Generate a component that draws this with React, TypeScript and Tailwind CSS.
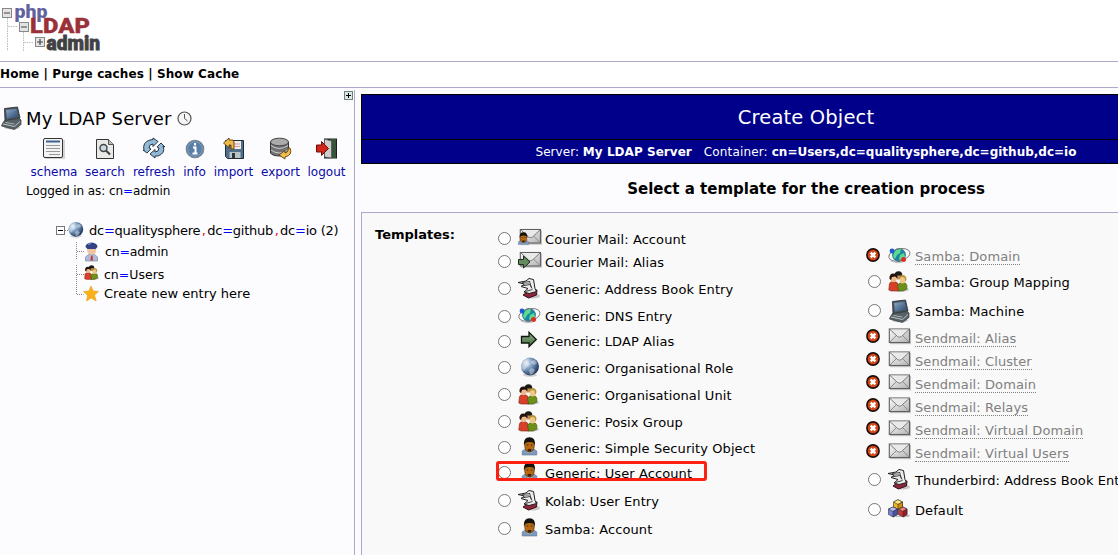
import React from "react";

type IconName =
  | "mailUser" | "mailAlias" | "book" | "dns" | "arrow" | "globe" | "group"
  | "user" | "machine" | "mail" | "cubes";

function Person() {
  return (
    <g>
      <path d="M3.700 18v-4l3-2h8.600l3 2v4z" fill="#7d99bb" stroke="#5d7899" strokeWidth=".6" />
      <path d="M8 11h6l-1 5h-4z" fill="#b9c9dc" />
      <ellipse cx="11" cy="8.700" rx="4.800" ry="6.500" fill="#b8690f" stroke="#3c2205" strokeWidth=".6" />
      <path d="M5.500 8.500C5 3 7 .3 11 .3S17 3 16.500 8.500l-1.300-2.700q-4-1.600-8.400 0z" fill="#15100b" />
      <path d="M9 12.500q2-1.500 4 0l-.5 2h-3z" fill="#3b2410" />
      <path d="M8.300 8h1.500M12.300 8h1.500" stroke="#3b2410" strokeWidth="1" />
    </g>
  );
}

function Envelope() {
  return (
    <g>
      <rect x="1.500" y="2.500" width="21" height="14.200" fill="#777" opacity=".4" />
      <rect x=".8" y="1.500" width="20.200" height="13.500" fill="url(#paper)" stroke="#606060" strokeWidth="1.100" />
      <path d="M1.500 14.500l7-7M20.500 14.500l-7-7" stroke="#8c8c8c" strokeWidth="1" />
      <path d="M1.500 2l7.500 7q2 1.500 4 0l7.500-7" fill="#e9e9e9" stroke="#7c7c7c" strokeWidth="1" />
    </g>
  );
}

function Globe() {
  return (
    <g>
      <ellipse cx="12" cy="18" rx="7" ry="1.800" fill="#888" opacity=".35" />
      <circle cx="12" cy="9.500" r="9" fill="url(#globe)" />
      <path d="M5 6q2-4 6-4l-1 3 2 2-3 3-3 4-3-3zM13 4l4-1 2 3-3 2-3-2zM11 13l3-2 3 2-2 4-3 1z" fill="#e8eef5" opacity=".45" />
    </g>
  );
}

function Icon({ name }: { name: IconName }) {
  let art: React.ReactNode = null;
  switch (name) {
    case "user":
      art = <g transform="translate(.5 0)"><Person /></g>;
      break;
    case "mail":
      art = <g transform="translate(.5 .5)"><Envelope /></g>;
      break;
    case "mailUser":
      art = <><g transform="translate(1.500 0)"><Envelope /></g><g transform="translate(-2.200 4) scale(.7)"><Person /></g></>;
      break;
    case "mailAlias":
      art = <><g transform="translate(1.500 0)"><Envelope /></g><path d="M.5 8.500h5V5l6.500 6-6.500 6v-3.500h-5z" fill="#638b5d" stroke="#1c2b1a" /></>;
      break;
    case "arrow":
      art = <path d="M3.500 6.500h7.500V2.300L18.300 9.500l-7.300 7.300v-3.800H3.500z" fill="url(#leaf)" stroke="#10180e" strokeWidth="1.300" />;
      break;
    case "globe":
      art = <Globe />;
      break;
    case "dns":
      art = (
        <>
          <circle cx="11" cy="9" r="6.500" fill="#1789a2" stroke="#0f5a77" strokeWidth=".6" />
          <path d="M7 5q3-3 6-2l-1 4-3 2-2 4-2-3zM12 9l4-2 1 4-3 4-3-2z" fill="#5edb91" />
          <ellipse cx="11.500" cy="9" rx="10.800" ry="6" transform="rotate(-14 11 9.500)" fill="none" stroke="#777" strokeWidth=".9" />
          <circle cx="4" cy="5" r="2.400" fill="#1e5bd0" /><circle cx="15.500" cy="13.500" r="2.500" fill="#df2e24" />
          <path d="M3 15q6 3 12 1" stroke="#bbb" fill="none" />
        </>
      );
      break;
    case "group":
      art = (
        <>
          <ellipse cx="13" cy="18.500" rx="8" ry="2" fill="#777" opacity=".4" />
          <circle cx="10.500" cy="4" r="3.800" fill="#1c1b16" /><path d="M8.500 4.500h4v4h-4z" fill="#c78d5c" />
          <path d="M.8 19l.6-6q.4-2.500 4-2.500 4 0 5 3L11 20H3z" fill="#d8402a" stroke="#7e2418" strokeWidth=".6" />
          <path d="M10.500 20l-1-6q2-3 6-2.500 3 .5 3.400 3V18l-4 2z" fill="#6d901b" stroke="#3c530c" strokeWidth=".6" />
          <ellipse cx="5.500" cy="7.500" rx="3" ry="3.700" fill="#edb98a" /><path d="M1.500 8q-.5-5.500 4-5.500T9.500 7L7 5.500 4 6 3 9z" fill="#24120d" />
          <ellipse cx="14.500" cy="9" rx="2.900" ry="3.500" fill="#efc886" /><path d="M11 8q0-4 3.500-4t4 4l-1 3-1-4.500-3-.5z" fill="#b59336" />
        </>
      );
      break;
    case "book":
      art = (
        <>
          <ellipse cx="15" cy="18" rx="7" ry="2.500" fill="#777" opacity=".4" />
          <path d="M5 17l8-5.500 6 .5-.5 5-8 3z" fill="#8d2639" stroke="#34101a" />
          <path d="M0 4.500l8-1.500L11 .5l4.500 1 1.500 9 1.500 3-7.500 2-5-1.500 4-3.500-7-2 3.500-2.500z" fill="#ececec" stroke="#222" />
          <path d="M4 4.500l8-1M3.500 8l8.500-1.500 2 4M11.500 3l2 7M7.500 13.500l7-2" stroke="#444" strokeWidth="1" fill="none" />
          <path d="M6 5.500l5-1 .5 1.500-5 1z" fill="#999" />
        </>
      );
      break;
    case "machine":
      art = (
        <>
          <ellipse cx="12" cy="20.500" rx="8" ry="1.800" fill="#777" opacity=".4" />
          <path d="M4.500 1.500L17.500 0l2.500 11-15 3z" fill="#4b545d" stroke="#25292e" strokeWidth=".8" />
          <path d="M6 3L16.500 1.800l1.700 8L7 11.500z" fill="url(#screen)" />
          <path d="M4.500 13.500l15-2L21 13v4.500L14.500 22.500l-13-3.500 1-2.500z" fill="#566166" stroke="#30383c" strokeWidth=".7" />
          <path d="M3 17l11.500 2.500L20 14.500" stroke="#bcc3c3" fill="none" /><path d="M5.500 15.500l9 1.500" stroke="#aab2b3" fill="none" />
        </>
      );
      break;
    case "cubes":
      art = (
        <>
          <path d="M5 18h16l1-2-6-1z" fill="#888" opacity=".5" />
          <g stroke="#333" strokeWidth=".6">
            <path d="M5.500 3L10 .7 14.500 3v5L10 10.500 5.500 8z" fill="#eeb71f" /><path d="M5.500 3L10 5.500 14.500 3 10 .7z" fill="#ffe777" /><path d="M10 5.500L14.500 3v5L10 10.500z" fill="#d78d0c" />
            <path d="M.5 10L5 8l4.500 2v5.500L5 18l-4.500-2.500z" fill="#7882d8" /><path d="M.5 10L5 8l4.500 2L5 12.500z" fill="#b8bef6" /><path d="M5 12.500L9.500 10v5.500L5 18z" fill="#4a54ab" />
            <path d="M10.500 10L15 8l4 2v5.500L15 18l-4.500-2.500z" fill="#cf3034" /><path d="M10.500 10L15 8l4 2-4 2.500z" fill="#ef8178" /><path d="M15 12.500l4-2.500v5.500L15 18z" fill="#981c22" />
          </g>
        </>
      );
      break;
  }
  return <svg width="24" height="23" viewBox="0 0 24 23" className="block shrink-0 overflow-visible">{art}</svg>;
}

function Defs() {
  return (
    <svg width="0" height="0" className="absolute">
      <defs>
        <linearGradient id="paper" x2="1" y2="1"><stop stopColor="#fafafa" /><stop offset="1" stopColor="#b4b4b4" /></linearGradient>
        <linearGradient id="leaf" x2="0" y2="1"><stop stopColor="#8fb58a" /><stop offset="1" stopColor="#3f653b" /></linearGradient>
        <linearGradient id="screen" x2="1" y2="1"><stop stopColor="#8fa9c8" /><stop offset="1" stopColor="#27466e" /></linearGradient>
        <radialGradient id="globe" cx=".3" cy=".3" r=".75"><stop stopColor="#e9f1f9" /><stop offset=".45" stopColor="#7d9dc2" /><stop offset="1" stopColor="#1d365e" /></radialGradient>
      </defs>
    </svg>
  );
}

type Row = { label: string; icon: IconName; h: string; off?: boolean; radio?: string; iconPad?: string };

const left: Row[] = [
  { label: "Courier Mail: Account", icon: "mailUser", h: "h-[23px]" },
  { label: "Courier Mail: Alias", icon: "mailAlias", h: "h-[27px]" },
  { label: "Generic: Address Book Entry", icon: "book", h: "h-[27px]" },
  { label: "Generic: DNS Entry", icon: "dns", h: "h-[25px]", radio: "pt-[5px]", iconPad: "pt-px" },
  { label: "Generic: LDAP Alias", icon: "arrow", h: "h-[27px]", radio: "pt-[5px]" },
  { label: "Generic: Organisational Role", icon: "globe", h: "h-[27px]" },
  { label: "Generic: Organisational Unit", icon: "group", h: "h-[27px]" },
  { label: "Generic: Posix Group", icon: "group", h: "h-[26px]" },
  { label: "Generic: Simple Security Object", icon: "user", h: "h-[25px]" },
  { label: "Generic: User Account", icon: "user", h: "h-[28px]" },
  { label: "Kolab: User Entry", icon: "book", h: "h-[28px]" },
  { label: "Samba: Account", icon: "user", h: "h-[28px]" },
];

const right: Row[] = [
  { label: "Samba: Domain", icon: "dns", h: "h-[26px]", off: true, radio: "pt-[3px]", iconPad: "pt-px" },
  { label: "Samba: Group Mapping", icon: "group", h: "h-[29px]" },
  { label: "Samba: Machine", icon: "machine", h: "h-[27px]" },
  { label: "Sendmail: Alias", icon: "mail", h: "h-[23px]", off: true },
  { label: "Sendmail: Cluster", icon: "mail", h: "h-[23px]", off: true },
  { label: "Sendmail: Domain", icon: "mail", h: "h-[23px]", off: true },
  { label: "Sendmail: Relays", icon: "mail", h: "h-[23px]", off: true },
  { label: "Sendmail: Virtual Domain", icon: "mail", h: "h-[23px]", off: true },
  { label: "Sendmail: Virtual Users", icon: "mail", h: "h-[27px]", off: true },
  { label: "Thunderbird: Address Book Entry", icon: "book", h: "h-[30px]" },
  { label: "Default", icon: "cubes", h: "h-[30px]" },
];

function TemplateRow({ row }: { row: Row }) {
  return (
    <div className={`flex items-start whitespace-nowrap ${row.h}`}>
      <div className={`w-[21px] shrink-0 ${row.radio ?? (row.off ? "pt-[2px]" : "pt-[4px]")}`}>
        {row.off ? (
          <svg width="14" height="14" viewBox="0 0 14 14" className="-ml-px block">
            <circle cx="7" cy="7" r="6.100" fill="#d4481a" stroke="#1d0c05" strokeWidth="1.600" />
            <path d="M4.700 4.700l4.600 4.600M9.300 4.700L4.700 9.300" stroke="#fff" strokeWidth="2.500" />
          </svg>
        ) : (
          <div className="ml-px size-[13px] rounded-full border border-[#767676] bg-white" />
        )}
      </div>
      <div className={`w-[27px] shrink-0 ${row.iconPad ?? "pt-0"}`}><Icon name={row.icon} /></div>
      <span className={`mt-[3px] h-[17px] leading-[17px] tracking-[0.09px] ${row.off ? "border-b border-dotted border-[#808080] text-[#808080]" : "text-black"}`}>{row.label}</span>
    </div>
  );
}

function Tool({ label, w, children }: { label: string; w: string; children: React.ReactNode }) {
  return (
    <div className={`flex shrink-0 flex-col items-center ${w}`}>
      <svg width="24" height="24" viewBox="0 0 24 24">{children}</svg>
      <span className="mt-[3px] text-[12px] leading-[17px] text-[#0a0aa8]">{label}</span>
    </div>
  );
}

function Logo() {
  return (
    <svg width="110" height="54" viewBox="0 0 110 54" className="block">
      <path d="M7.500 18v33M23.500 32v20M8 26.500h10M24 42.500h10" stroke="#bbb" strokeDasharray="1.500 1" fill="none" />
      <g fill="#e4e4e4" stroke="#888">
        <rect x="2.500" y="8.500" width="9" height="9" /><rect x="19.500" y="22.500" width="9" height="9" /><rect x="35.500" y="37.500" width="9" height="9" />
      </g>
      <path d="M4 13h6M21 27h6M37 42h6M40 39v6" stroke="#444" strokeWidth="1.200" />
      <g fontFamily="'Roboto', 'DejaVu Sans', sans-serif" fontWeight="900">
        <text x="14.500" y="17.500" fontSize="18.500" fill="#62629f" textLength="33" lengthAdjust="spacingAndGlyphs">php</text>
        <text x="30" y="33" fontSize="19.500" fill="#9b3038" stroke="#9b3038" strokeWidth=".3" textLength="60" lengthAdjust="spacingAndGlyphs">LDAP</text>
        <text x="46.500" y="50" fontSize="21" fill="#414144" stroke="#414144" strokeWidth=".8" textLength="53.500" lengthAdjust="spacingAndGlyphs">admin</text>
      </g>
    </svg>
  );
}

function Comma() {
  return <span className="inline-block w-[7px] text-center text-red-600">,</span>;
}
function Eq() {
  return <span className="text-[#0000ff]">=</span>;
}

export default function App() {
  return (
    <div className="flex h-[555px] w-[1118px] flex-col overflow-hidden bg-[#fcfcfe] font-['DejaVu_Sans',Verdana,sans-serif] text-[13px] text-black">
      <Defs />
      <header className="h-[62px] shrink-0 border-b border-[#aaaacc] bg-white"><Logo /></header>
      <nav className="h-[26px] shrink-0 whitespace-pre border-b border-[#aaaacc] bg-white pt-[4px] text-[12px] font-bold leading-[17px] tracking-[0.1px]">Home | Purge caches | Show Cache</nav>
      <div className="flex min-h-0 flex-1 pt-[2px]">
        <aside className="relative w-[355px] shrink-0 border-r border-[#aaaacc]">
          <svg width="9" height="9" viewBox="0 0 9 9" className="absolute right-px top-px">
            <rect x=".5" y=".5" width="8" height="8" fill="#dce8e8" stroke="#6f8080" /><path d="M2 4.500h5M4.500 2v5" stroke="#000" />
          </svg>
          <div className="flex h-[46px] items-start pt-[17px]">
            <div className="w-[26px] shrink-0"><Icon name="machine" /></div>
            <span className="whitespace-nowrap text-[18px] leading-[24px] tracking-[0.15px]">My LDAP Server</span>
            <svg width="15" height="15" viewBox="0 0 15 15" className="ml-[5px] mt-[4px]">
              <circle cx="7.500" cy="7.500" r="6.500" fill="#f5f5f5" stroke="#555" strokeWidth="1.200" /><path d="M7.500 3v4.500l3 2.500" stroke="#555" fill="none" />
            </svg>
          </div>
          <div className="flex whitespace-nowrap pl-[27px] pt-px">
            <Tool label="schema" w="w-[54px]">
              <rect x="3" y="3" width="20" height="19" fill="#999" opacity=".4" /><rect x="1.500" y="1.500" width="19" height="19" rx="1.500" fill="#f3f3f3" stroke="#333" />
              <path d="M4 4.500h14" stroke="#3d638f" strokeWidth="2" /><path d="M4 8.500h14M4 11.500h14M4 14.500h14M7 17.500h11" stroke="#999" />
            </Tool>
            <Tool label="search" w="w-[48px]">
              <path d="M3.500 2.500h12l5 5v14h-17z" fill="#e9e9e7" stroke="#333" /><path d="M15.500 2.500v5h5" fill="#bbb" stroke="#555" /><circle cx="10.500" cy="11" r="3.500" fill="#cad8e0" stroke="#444" strokeWidth="1.400" /><path d="M13 13.500l4 4" stroke="#444" strokeWidth="2.200" />
            </Tool>
            <Tool label="refresh" w="w-[50px]">
              <g fill="#93b9d6" stroke="#263949" strokeWidth="1"><path d="M2 14Q0 5 8 3l3-.5V1l5 3.500-5 5V7Q7 7 7 11l2 1-4 4-4-3z" /><path d="M21 9q3 7-5 10h-3v2l-5-4 5-4.500V15q4 0 4-4l-2-1 4-4 4 4z" /></g>
            </Tool>
            <Tool label="info" w="w-[31px]">
              <circle cx="12" cy="12" r="8.700" fill="#587eaa" stroke="#7b8590" strokeWidth="1.300" /><circle cx="12" cy="12" r="7.300" fill="none" stroke="#7d9dc0" /><path d="M12 6v2.500M10 10.500h2.500v5.500M9.500 16.500h5" stroke="#fff" strokeWidth="2" fill="none" />
            </Tool>
            <Tool label="import" w="w-[47px]">
              <path d="M3.500 3.500h18v18h-16l-2-2z" fill="#516f8a" stroke="#202c35" /><path d="M9 4h10v8H9z" fill="#f1eeee" /><path d="M10 7h8M10 9.500h8" stroke="#d99" /><path d="M7.500 15h11v6h-11z" fill="#b8c2c9" /><path d="M10 16h3v5h-3z" fill="#333" />
              <path d="M9 12V8H7v3L1.500 6 7 1v2h4l1 2v7z" fill="#efb84b" stroke="#5d3b0b" strokeWidth=".9" />
            </Tool>
            <Tool label="export" w="w-[47px]">
              <path d="M1.500 5v11c2 4 16 4 18 0V5z" fill="#727272" stroke="#333" /><path d="M2 8.500q8 6 17 0M2 13q8 6 17 0" stroke="#ccc" fill="none" /><ellipse cx="10.500" cy="5" rx="9" ry="3.800" fill="#aaa" stroke="#444" />
              <path d="M21 11q3 7-5 9v2l-6-4 6-4.500V16q4-1 3-5z" fill="#f0bd50" stroke="#5d3b0b" strokeWidth=".9" />
            </Tool>
            <Tool label="logout" w="w-[45px]">
              <path d="M9 1.500h13v20H9z" fill="#182018" /><path d="M15 2h6v19h-6z" fill="#35543a" /><path d="M9.500 2l7 2v17l-7-1z" fill="#ccc" stroke="#555" strokeWidth=".8" /><path d="M1.500 8h5V4.500l7 7-7 7V15h-5z" fill="#d3261a" stroke="#681008" />
            </Tool>
          </div>
          <div className="pl-[26px] pt-[2px] text-[12px] leading-[17px] tracking-[-0.08px]">Logged in as: cn<Eq />admin</div>
          <div className="whitespace-nowrap pt-[19px]">
            <div className="flex h-[22px] items-center pl-[56px]">
              <svg width="33" height="22" viewBox="0 0 33 22" className="shrink-0">
                <rect x=".5" y="7.500" width="8" height="8" fill="#fff" stroke="#777" /><path d="M2 11.500h5" stroke="#000" /><path d="M9 11.500h4" stroke="#888" strokeDasharray="1 1" />
                <g transform="translate(10 2.500) scale(.82)"><Globe /></g>
              </svg>
              <span className="mt-px tracking-[-0.24px]">dc<Eq />qualitysphere<Comma />dc<Eq />github<Comma />dc<Eq />io (2)</span>
            </div>
            <div className="flex h-[22px] items-center pl-[76px]">
              <svg width="29" height="22" viewBox="0 0 29 22" className="shrink-0">
                <path d="M.5 1v18M1 10.500h7" stroke="#888" strokeDasharray="1 1" />
                <path d="M9.500 20v-4l3-2.500h6l3 2.500v4z" fill="#aebbd9" stroke="#7d8aa9" strokeWidth=".7" /><path d="M15 14.500h1.500l.5 5h-2.500z" fill="#cc3434" />
                <ellipse cx="15.700" cy="8.500" rx="4.600" ry="5.300" fill="#f0c4a0" /><path d="M9.500 6q0-4 6-4.500 6 .5 6 4.500l-2 2h-8z" fill="#344184" /><path d="M12 3.500l3-1" stroke="#8d9ad7" />
              </svg>
              <span className="text-[12.500px] tracking-[-0.15px]">cn<Eq />admin</span>
            </div>
            <div className="flex h-[22px] items-center pl-[76px]">
              <svg width="28" height="22" viewBox="0 0 28 22" className="shrink-0">
                <path d="M.5 2v20M1 11.500h7" stroke="#888" strokeDasharray="1 1" />
                <g transform="translate(8 2) scale(.72)"><Icon name="group" /></g>
              </svg>
              <span className="mt-[2px] text-[12.500px]">cn<Eq />Users</span>
            </div>
            <div className="flex h-[18px] items-center pl-[76px]">
              <svg width="28" height="18" viewBox="0 0 28 18" className="shrink-0">
                <path d="M.5 0v9.500h7" stroke="#888" strokeDasharray="1 1" fill="none" />
                <path d="M15 1l2.200 5 5.300.5-4 3.600 1.700 5.900-5-3-4.600 3 1-5.500-4-4 5.400-.5z" fill="#fbb117" stroke="#e49b10" strokeWidth=".6" />
              </svg>
              <span>Create new entry here</span>
            </div>
          </div>
        </aside>
        <main className="ml-[6px] mt-[4px] w-[890px] shrink-0">
          <h1 className="h-[46px] border border-black bg-[#00008b] pt-[11px] text-center text-[19.500px] leading-[24px] tracking-[0.15px] text-white">Create Object</h1>
          <div className="flex h-[24px] justify-center gap-[12px] whitespace-nowrap border border-t-0 border-black bg-[#00008b] pt-[4px] text-[12px] leading-[17px] text-white">
            <span className="tracking-[0.04px]">Server: <b>My LDAP Server</b></span>
            <span><span className="tracking-[0.15px]">Container: </span><b>cn=Users,dc=qualitysphere,dc=github,dc=io</b></span>
          </div>
          <h2 className="h-[48px] pt-[15px] text-center text-[15px] font-bold leading-[20px]">Select a template for the creation process</h2>
          <section className="flex h-[360px] items-start border border-[#aaaacc] bg-[#f9f9f9]">
            <div className="w-[135px] shrink-0 pl-[13px] pt-[13px] font-bold leading-[17px]">Templates:</div>
            <div className="relative w-[370px] shrink-0 pt-[15px]">
              {left.map((r) => <TemplateRow key={r.label} row={r} />)}
              <div className="absolute -left-px top-[248px] h-[20px] w-[211px] rounded-[3px] border-[3px] border-[#fc2012]" />
            </div>
            <div className="pt-[32px]">{right.map((r) => <TemplateRow key={r.label} row={r} />)}</div>
          </section>
        </main>
      </div>
    </div>
  );
}
